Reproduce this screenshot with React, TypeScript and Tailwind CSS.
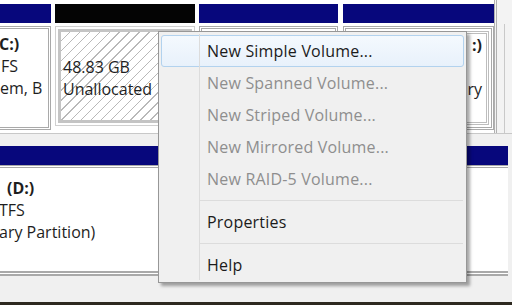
import React from "react";

const font = "font-['Open_Sans','Noto_Sans',sans-serif]";

function MenuItem({ label, disabled, active }: { label: string; disabled?: boolean; active?: boolean }) {
  return (
    <div className="h-[32px] px-[2px] flex">
      <div
        className={
          "flex-1 flex items-center pl-[45px] rounded-[3px] border tracking-[0.2px] " +
          (active
            ? "border-[#b2d2ee] bg-[linear-gradient(#f4f9fe,#e8f1fb)]"
            : "border-transparent") +
          (disabled ? " text-[#8e8e8e]" : " text-[#1b1b1b]")
        }
      >
        <span>{label}</span>
      </div>
    </div>
  );
}

function Separator() {
  return (
    <div className="h-[11px] flex items-center pl-[41px] pr-[3px]">
      <div className="flex-1 h-[2px] border-t border-[#dcdcdc] border-b-white"></div>
    </div>
  );
}

export default function App() {
  return (
    <div className={`relative w-[512px] h-[305px] overflow-hidden bg-[#f0f0f0] text-[16px] text-[#1e1e1e] ${font}`}>
      {/* upper disk */}
      <div className="h-[134px] flex bg-white border-b border-[#c8c8c8]">
        {/* col 1 */}
        <div className="w-[51px] flex flex-col pt-[4px]">
          <div className="h-[19px] bg-[#07077c]"></div>
          <div className="mt-[3px] h-[104px] border-[3px] border-l-0 border-double border-[#a9a9a9] bg-white overflow-hidden leading-[22px] pt-[4px] whitespace-nowrap">
            <div className="font-bold -ml-[1px]">C:)</div>
            <div className="ml-[1px]">FS</div>
            <div>em, B</div>
          </div>
        </div>
        <div className="w-[4px]"></div>
        {/* col 2 */}
        <div className="w-[140px] flex flex-col pt-[4px]">
          <div className="h-[19px] bg-[#040404]"></div>
          <div className="mt-[3px] h-[100px] border border-[#d0d0d0] p-[2px] bg-white">
            <div className="h-full border-[3px] border-[#c4c4c4] bg-[repeating-linear-gradient(135deg,#ffffff_0px,#ffffff_6px,#b9b9b9_6px,#b9b9b9_7px)] pl-[2px] pt-[24px] leading-[22px]">
              <div>48.83 GB</div>
              <div>Unallocated</div>
            </div>
          </div>
        </div>
        <div className="w-[4px]"></div>
        {/* col 3 */}
        <div className="w-[139px] flex flex-col pt-[4px]">
          <div className="h-[19px] bg-[#07077c]"></div>
          <div className="mt-[3px] h-[104px] border-[3px] border-double border-[#a9a9a9] bg-white"></div>
        </div>
        <div className="w-[5px]"></div>
        {/* col 4 */}
        <div className="w-[151px] flex flex-col pt-[4px]">
          <div className="h-[19px] bg-[#07077c]"></div>
          <div className="mt-[3px] h-[104px] border-[3px] border-double border-[#a9a9a9] bg-white p-[2px]">
            <div className="h-full border-[3px] border-double border-[#bdbdbd] flex flex-col items-end pr-[4px] pt-[0px] leading-[22px]">
              <div className="font-bold">:)</div>
              <div className="mt-[22px]">ry</div>
            </div>
          </div>
        </div>
        <div className="flex-1 border-l-[3px] border-double border-[#b0b0b0] bg-[#f3f3f3] flex justify-center">
          <div className="w-px bg-[#c9c9c9] mt-[24px]"></div>
        </div>
      </div>

      {/* lower disk */}
      <div className="mt-[12px] w-[508px] flex flex-col">
        <div className="h-[19px] bg-[#07077c]"></div>
        <div className="h-[111px] border-t-[3px] border-b-[5px] border-double border-[#a9a9a9] bg-white pt-[9px] leading-[22px] whitespace-nowrap">
          <div className="font-bold pl-[7px]">(D:)</div>
          <div className="-ml-[1px]">TFS</div>
          <div className="-ml-[1px]">ary Partition)</div>
        </div>
      </div>

      {/* bottom frame */}
      <div className="absolute left-0 right-0 bottom-0 h-[3px] bg-[#2d2920]"></div>

      {/* context menu */}
      <div className="absolute left-[158px] top-[31px] w-[309px] h-[252px] bg-[#f0f0f0] border border-[#979797] shadow-[3px_3px_3px_rgba(0,0,0,0.35)] pt-[3px]">
        <div className="absolute left-[40px] top-[2px] bottom-[2px] w-[2px] border-l border-[#dcdcdc] border-r-white"></div>
        <MenuItem label="New Simple Volume..." active />
        <MenuItem label="New Spanned Volume..." disabled />
        <MenuItem label="New Striped Volume..." disabled />
        <MenuItem label="New Mirrored Volume..." disabled />
        <MenuItem label="New RAID-5 Volume..." disabled />
        <Separator />
        <MenuItem label="Properties" />
        <Separator />
        <MenuItem label="Help" />
      </div>
    </div>
  );
}
